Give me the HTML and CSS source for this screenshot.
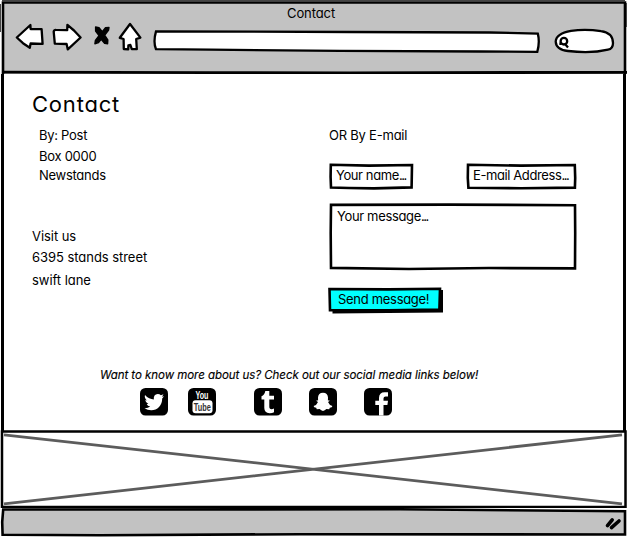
FILE: index.html
```
<!DOCTYPE html>
<html lang="en">
<head>
<meta charset="utf-8">
<title>Contact</title>
<link rel="stylesheet" href="styles.css">
</head>
<body>
<div class="window">
  <header class="chrome">
    <svg class="sketch" viewBox="0 0 627 74" preserveAspectRatio="none" aria-hidden="true">
      <path d="M3 75V2.5H625V75" fill="#c2c2c2" stroke="#000" stroke-width="2.6"/>
      <path d="M2 0.5H625M0.5 4V32M626.5 3V27" stroke="#444" stroke-width="1"/>
      <path d="M2 72.2L210 72.6L350 72.8L627 72.3" fill="none" stroke="#000" stroke-width="2.8"/>
    </svg>
    <div class="title">Contact</div>
    <div class="toolbar">
      <svg class="nav" viewBox="14 20 130 34" width="130" height="34" fill="#fff" stroke="#000" stroke-width="2.3" stroke-linejoin="round" stroke-linecap="round" aria-hidden="true">
        <path d="M16.8 37.5L30.4 25L30.6 29L41.6 29.2L42.6 43.8L30.6 43.5L29.8 47.8L23 43.2Z"/>
        <path d="M53.7 31.6Q54 29.8 56 29.9L67.2 30.2L67.4 24.9L74 30.5L80.6 37.5L67.8 49.4L66.6 44L54.8 43.6Z"/>
        <path d="M130 24L140.4 37.6L136.2 39L136.8 49L131.8 49.2L130.4 45L128.4 45.4L128.2 49.4L123.8 49L123.6 39L119.8 37.8Z"/>
        <path d="M95.6 27L99 27.6L102.3 31.8L105.5 27.8L109 27.5L108.6 30L104.6 35.2L107.8 40L107.6 43.8L104.6 43.4L101.2 39.2L98.5 42.6L94.9 43.8L95.4 40.4L99 35.6L95.6 31Z" fill="#000" stroke-width="1.4"/>
      </svg>
      <svg class="address" viewBox="153 29 388 25" width="388" height="25" aria-hidden="true">
        <path d="M156 31.4L350 32L490 32.5L537.8 33.6Q540 42 537.3 51.8L480 51.5L340 50.9L210 49.6L156 49.2Q153 42 156 31.4Z" fill="#fff" stroke="#000" stroke-width="2.3"/>
      </svg>
      <svg class="search" viewBox="553 27 62 28" width="62" height="28" fill="#fff" stroke="#000" stroke-width="2.3" aria-hidden="true">
        <path d="M571 30.8Q586 28.6 601 31.2Q612.8 32.8 613 43Q613 49 608 49.6Q591 53.8 568 51Q556 49.8 555.7 41.5Q556 33.5 571 30.8Z"/>
        <circle cx="563.9" cy="41.2" r="3.3"/>
        <path d="M560.5 42.5V45M565.5 44.5L568 47.4"/>
      </svg>
    </div>
  </header>

  <main class="page">
    <h1>Contact</h1>
    <div class="columns">
      <section class="post">
        <p class="by">By: Post</p>
        <p class="box">Box 0000</p>
        <p class="town">Newstands</p>
        <div class="visit">
          <p class="vis">Visit us</p>
          <p class="street">6395 stands street</p>
          <p class="lane">swift lane</p>
        </div>
      </section>
      <section class="mail">
        <p class="or">OR By E-mail</p>
        <div class="fields">
          <div class="field name">
            <svg class="sketch" viewBox="0 0 85 27" aria-hidden="true"><path d="M1.8 1.8L40 2.6L83 2L82.6 24.4L45 25.4L20 25L2 24.6L1.6 14Z"/></svg>
            <span>Your name<span class="dots">...</span></span>
          </div>
          <div class="field email">
            <svg class="sketch" viewBox="0 0 111 27" aria-hidden="true"><path d="M2 1.8L55 2.6L108.8 2L109.2 15L108.9 24.6L55 25.2L2.4 24.7L1.8 15Z"/></svg>
            <span>E-mail Address<span class="dots">...</span></span>
          </div>
        </div>
        <div class="field message">
          <svg class="sketch" viewBox="0 0 248 68" aria-hidden="true"><path d="M2 1.9L120 1.6L246 2.2L246.2 30L246 65.4L160 65L80 66L2 64.9L1.7 30Z"/></svg>
          <span>Your message<span class="dots">...</span></span>
        </div>
        <div class="send">
          <svg class="sketch" viewBox="0 0 116 27" aria-hidden="true">
            <path d="M4.5 4L115 3V25.5L4.5 26.5Z" fill="#000"/>
            <path class="face" d="M1.5 2L60 2.4L112 1.8L111.4 22.5L60 23.2L2 23.3Z"/>
          </svg>
          <span>Send message!</span>
        </div>
      </section>
    </div>
    <p class="more">Want to know more about us? Check out our social media links below!</p>
    <div class="social">
      <svg viewBox="0 0 28 28" width="28" height="28" aria-label="Twitter">
        <rect width="28" height="27.5" rx="5.5"/>
        <path fill="#fff" d="M5 7Q9 11.3 13.8 11.4Q13.3 6.3 17.8 6Q19.6 6 20.9 7.3L23.5 6.3L22 8.7L24 8.3L22.2 10.5C22.3 17.8 17.2 22.3 11.2 22.2Q7.5 22.2 4.5 20.3Q8 20.4 10.2 18.6Q7.5 18 6.7 16H8.4Q5.5 14.8 5.3 11.9L7 12.4Q4 10 5 7Z"/>
      </svg>
      <svg viewBox="0 0 28 28" width="28" height="28" aria-label="YouTube">
        <rect width="28" height="27.5" rx="5.5"/>
        <rect x="4.5" y="12.3" width="20" height="13" rx="3" fill="#fff"/>
        <text class="yt" x="7.5" y="10.8" textLength="13" lengthAdjust="spacingAndGlyphs" fill="#fff">You</text>
        <text class="yt tube" x="5.8" y="23" textLength="17" lengthAdjust="spacingAndGlyphs">Tube</text>
      </svg>
      <svg viewBox="0 0 28 28" width="28" height="28" aria-label="Tumblr">
        <rect width="28" height="27.5" rx="5.5"/>
        <path fill="#fff" d="M11.3 3H15.3V7.7H20V11.5H15.3V18.5Q15.3 21.3 17.5 21.3Q18.7 21.3 20 20.6V24.3Q18 25.4 15.5 25.3Q10.4 25 10.3 20V11.5H7.5V8.3Q10.7 7 11.3 3Z"/>
      </svg>
      <svg viewBox="0 0 28 28" width="28" height="28" aria-label="Snapchat">
        <rect width="28" height="27.5" rx="5.5"/>
        <path fill="#fff" d="M14 4.8Q18.7 4.9 19 9.6L18.9 12.4L20.5 12.3Q20.8 13.3 19 14.1Q20.2 17.2 23.4 18.1Q23.3 19.5 20.8 19.8L20.2 21.2L17.4 21.1Q15.7 22.9 14 22.9Q12.3 22.9 10.6 21.1L7.8 21.2L7.2 19.8Q4.7 19.5 4.6 18.1Q7.8 17.2 9 14.1Q7.2 13.3 7.5 12.3L9.1 12.4L9 9.6Q9.3 4.9 14 4.8Z"/>
      </svg>
      <svg viewBox="0 0 28 28" width="28" height="28" aria-label="Facebook">
        <rect width="28" height="27.5" rx="5.5"/>
        <path fill="#fff" d="M15 27.5V17H11.3V12.7H15V10Q15 4.3 20.8 4.3H24V8.4H21.5Q19.5 8.4 19.5 10.5V12.7H24L23.4 17H19.5V27.5Z"/>
      </svg>
    </div>
  </main>

  <div class="banner">
    <svg class="sketch" viewBox="0 0 627 78" aria-hidden="true">
      <path d="M4 4.8L622 73.8M4 73.8L622 4.8" stroke="#5c5c5c" stroke-width="2.8"/>
      <rect x="2" y="1.5" width="623.5" height="75.5" fill="none" stroke="#000" stroke-width="2.5"/>
    </svg>
  </div>
  <footer class="status">
    <svg class="sketch" viewBox="0 0 627 29" aria-hidden="true">
      <path d="M3.2 1.5L400 1.3L625 3.2V26.5L300 26.2L100 27.2L2.6 26.8L2.2 14Z" fill="#c2c2c2" stroke="#000" stroke-width="2.6"/>
      <path d="M607.5 17.7L612.2 11.8M611.5 19.6L619 13" stroke="#000" stroke-width="3.6" stroke-linecap="round"/>
    </svg>
  </footer>
</div>
</body>
</html>
```
FILE: styles.css
```
* { box-sizing: border-box; }
body {
  margin: 0;
  background: #fff;
  color: #000;
  font: 13px/20px Inter, "Open Sans", sans-serif;
  font-feature-settings: "cv11", "calt" 0;
}
p, h1 { margin: 0; white-space: nowrap; }
span { white-space: nowrap; }
.window { width: 627px; height: 537px; display: flex; flex-direction: column; overflow: hidden; }
.sketch { position: absolute; inset: 0; width: 100%; height: 100%; z-index: -1; }

.chrome { position: relative; height: 74px; padding-top: 3px; }
.title { margin-left: 287px; height: 17px; letter-spacing: -0.1px; }
.toolbar { display: flex; align-items: flex-start; padding-left: 14px; }
.address { margin: 9px 0 0 9px; }
.search { margin: 7px 0 0 12px; }

.page { height: 358px; margin: 0 1px 0 1px; padding: 16px 0 0 28px; border-left: 3px solid #000; border-right: 3px solid #000; }
h1 { font-size: 22px; line-height: 28px; font-weight: 400; letter-spacing: 0.8px; }
.columns { display: flex; padding-top: 7px; height: 247px; }
.post { width: 296px; padding-left: 7px; letter-spacing: -0.28px; }
.box { margin-top: 1px; }
.town { margin-top: -1px; }
.visit { margin: 41px 0 0 -7px; letter-spacing: -0.05px; }
.street { margin-top: 1px; }
.lane { margin-top: 3px; }
.mail { width: 248px; margin-left: 1px; letter-spacing: -0.22px; }
.fields { display: flex; justify-content: space-between; margin-top: 18px; }
.field { position: relative; height: 27px; padding: 2px 0 0 7px; letter-spacing: -0.4px; }
.field path, .face { fill: #fff; stroke: #000; stroke-width: 2.6; }
.field .dots { letter-spacing: -1.4px; }
.name { width: 85px; }
.email { width: 111px; }
.message { height: 68px; margin-top: 13px; padding: 3px 0 0 8px; letter-spacing: -0.35px; }
.send { position: relative; width: 116px; height: 27px; margin: 16px 0 0 -1px; padding: 2px 0 0 10px; letter-spacing: -0.3px; }
.send .face { fill: #00ffff; }
.more { font-size: 11.5px; font-style: italic; margin: 0 0 0 68px; letter-spacing: -0.05px; -webkit-text-stroke: 0.15px #000; }
.social { display: flex; margin: 3px 0 0 108px; }
.social svg:nth-child(2) { margin: 0 38px 0 20px; }
.social svg:nth-child(4) { margin: 0 27px; }
.yt { font: 700 11px "Liberation Sans", sans-serif; letter-spacing: 0; }
.tube { fill: #333; }

.banner { position: relative; height: 78px; margin-top: -2px; }
.status { position: relative; height: 29px; }
```
